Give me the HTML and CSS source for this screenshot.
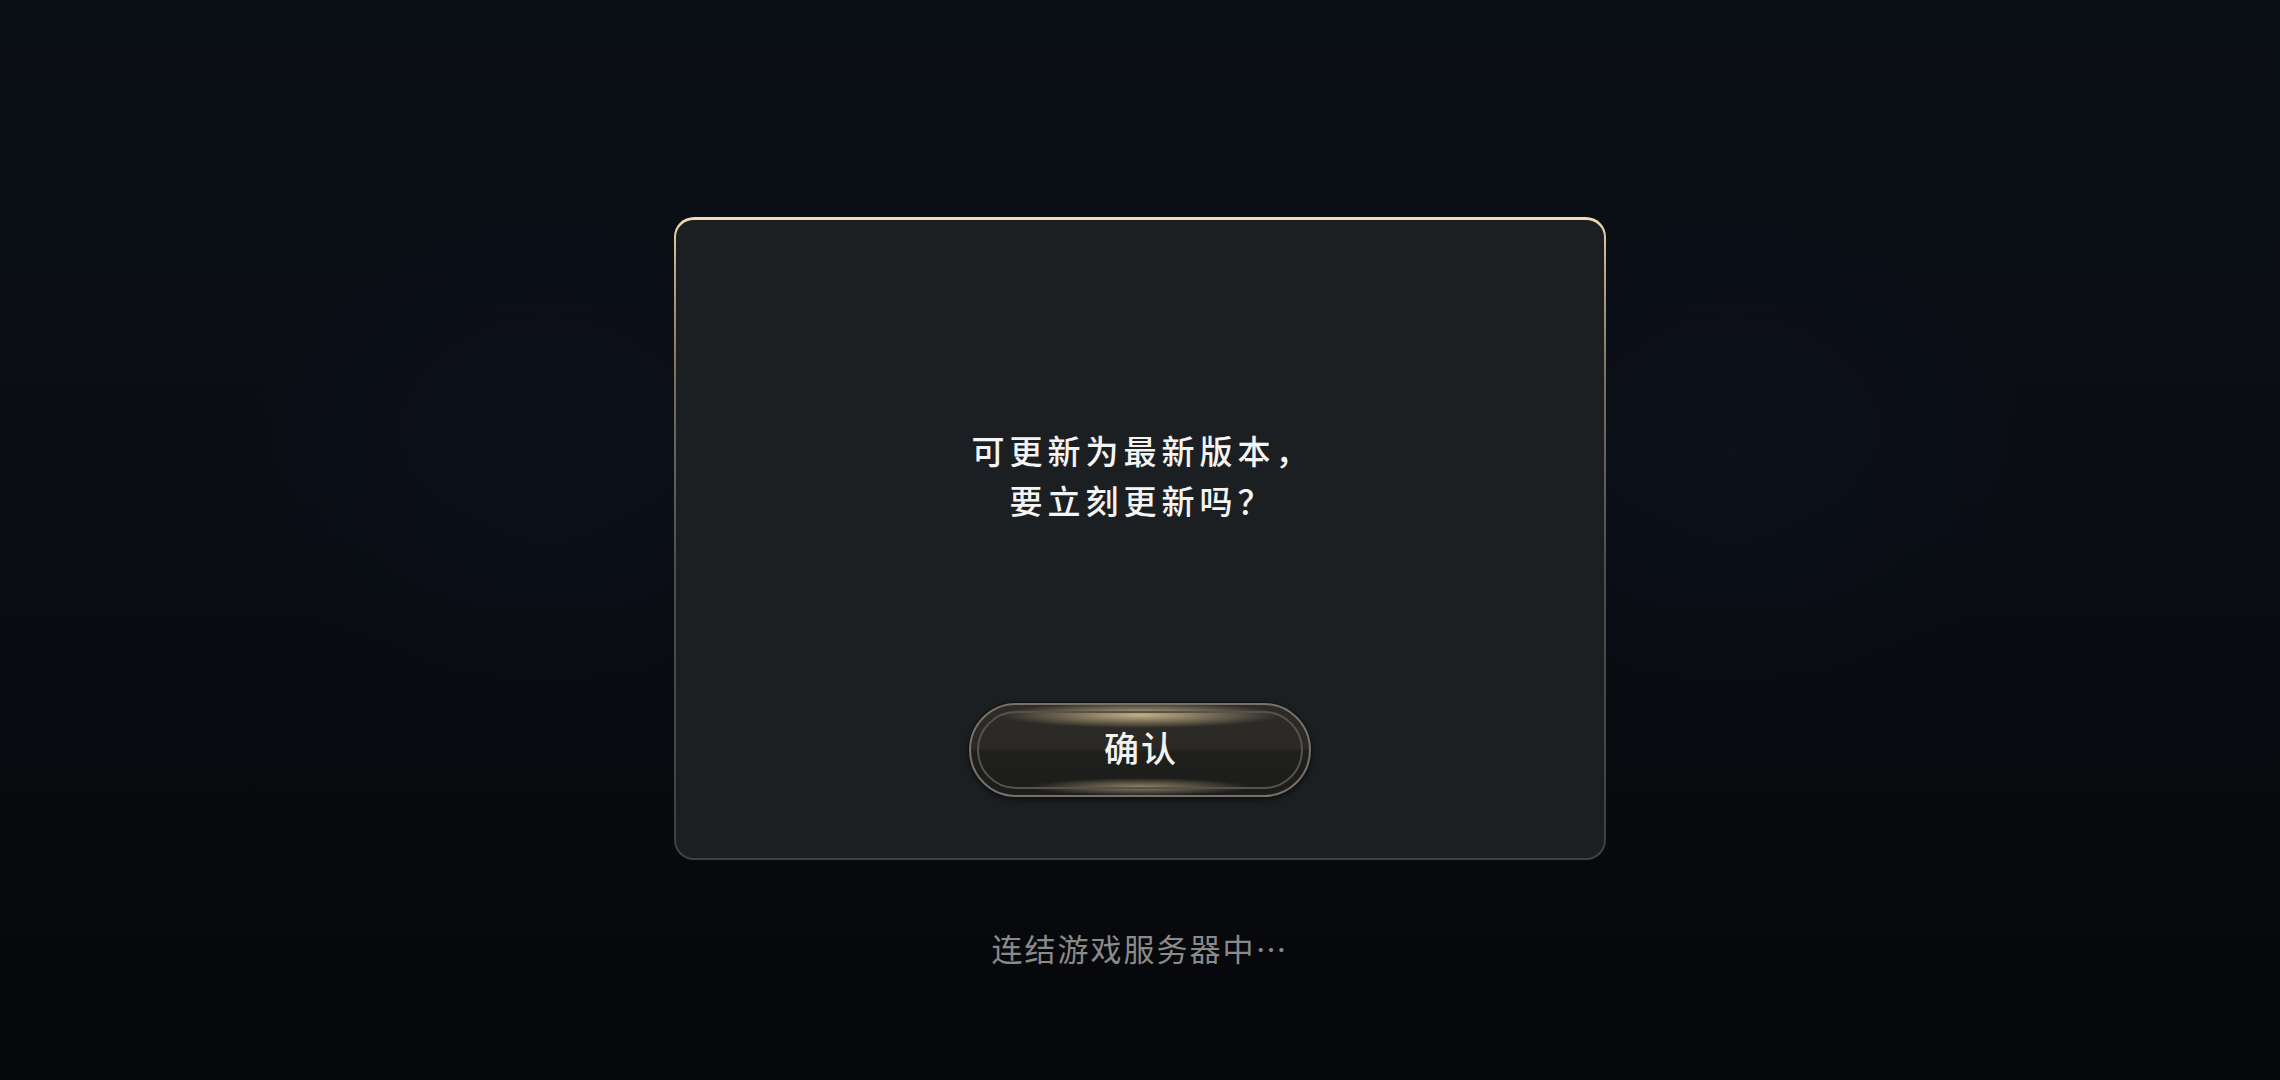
FILE: index.html
```html
<!DOCTYPE html>
<html lang="zh-CN">
<head>
  <meta charset="UTF-8" />
  <meta name="viewport" content="width=device-width, initial-scale=1.0" />
  <title>更新提示</title>
  <link rel="stylesheet" href="styles.css">
</head>
<body>
  <div class="screen">
    <div class="dialog">
      <div class="message">
        <p>可更新为最新版本，</p>
        <p>要立刻更新吗？</p>
      </div>
      <button class="confirm-btn" type="button"><span>确认</span></button>
    </div>
    <div class="status">连结游戏服务器中…</div>
  </div>
</body>
</html>
```

FILE: styles.css
```css
html, body {
  margin: 0;
  height: 100%;
}
body {
  font-family: "Noto Sans CJK SC", "Noto Sans", sans-serif;
  background:
    radial-gradient(ellipse 300px 260px at 24% 42%, rgba(15, 21, 36, 0.45), rgba(15, 21, 36, 0) 100%),
    radial-gradient(ellipse 300px 260px at 76% 42%, rgba(15, 21, 36, 0.45), rgba(15, 21, 36, 0) 100%),
    linear-gradient(to bottom, #0b0f16 0%, #0a0d14 45%, #080a0e 75%, #06070a 100%);
  color: #f2f2f2;
  overflow: hidden;
}
.screen {
  display: flex;
  flex-direction: column;
  align-items: center;
  padding-top: 217px;
}
.dialog {
  box-sizing: border-box;
  width: 932px;
  height: 643px;
  border: 2px solid transparent;
  border-top-width: 3px;
  border-radius: 20px;
  background:
    linear-gradient(#1b1f22, #1b1f22) padding-box,
    linear-gradient(to bottom, #f0deb4 0%, #c2ad84 7%, #7a705f 25%, #4f4d49 55%, #404040 100%) border-box;
  display: flex;
  flex-direction: column;
  align-items: center;
  padding-top: 205px;
}
.message {
  text-align: center;
  font-size: 33px;
  line-height: 50px;
  letter-spacing: 5px;
  color: #f4f4f4;
  font-weight: 500;
  padding-left: 5px;
}
.message p {
  margin: 0;
}
.confirm-btn {
  position: relative;
  margin-top: 178px;
  width: 342px;
  height: 94px;
  border-radius: 47px;
  border: 2px solid #77716a;
  background:
    radial-gradient(ellipse 140px 13px at 50% 10px, rgba(224, 200, 150, 0.85), rgba(224, 200, 150, 0) 100%),
    radial-gradient(ellipse 110px 9px at 50% 82px, rgba(220, 196, 146, 0.6), rgba(220, 196, 146, 0) 100%),
    linear-gradient(to bottom, #2c2b28 0%, #2a2926 48%, #1f1f1d 52%, #1c1c1b 100%);
  box-shadow: 0 0 0 1px #111, 0 2px 6px rgba(0, 0, 0, 0.6);
  cursor: pointer;
  padding: 0 0 8px;
  font-family: inherit;
}
.confirm-btn::before {
  content: "";
  position: absolute;
  inset: 6px;
  border-radius: 40px;
  border: 2px solid #56534e;
  pointer-events: none;
}
.confirm-btn span {
  font-size: 35px;
  font-weight: 500;
  letter-spacing: 2px;
  color: #f2f2f2;
  padding-left: 2px;
}
.status {
  margin-top: 68px;
  font-size: 31px;
  line-height: 40px;
  letter-spacing: 2px;
  color: #8a8a8a;
}
```
